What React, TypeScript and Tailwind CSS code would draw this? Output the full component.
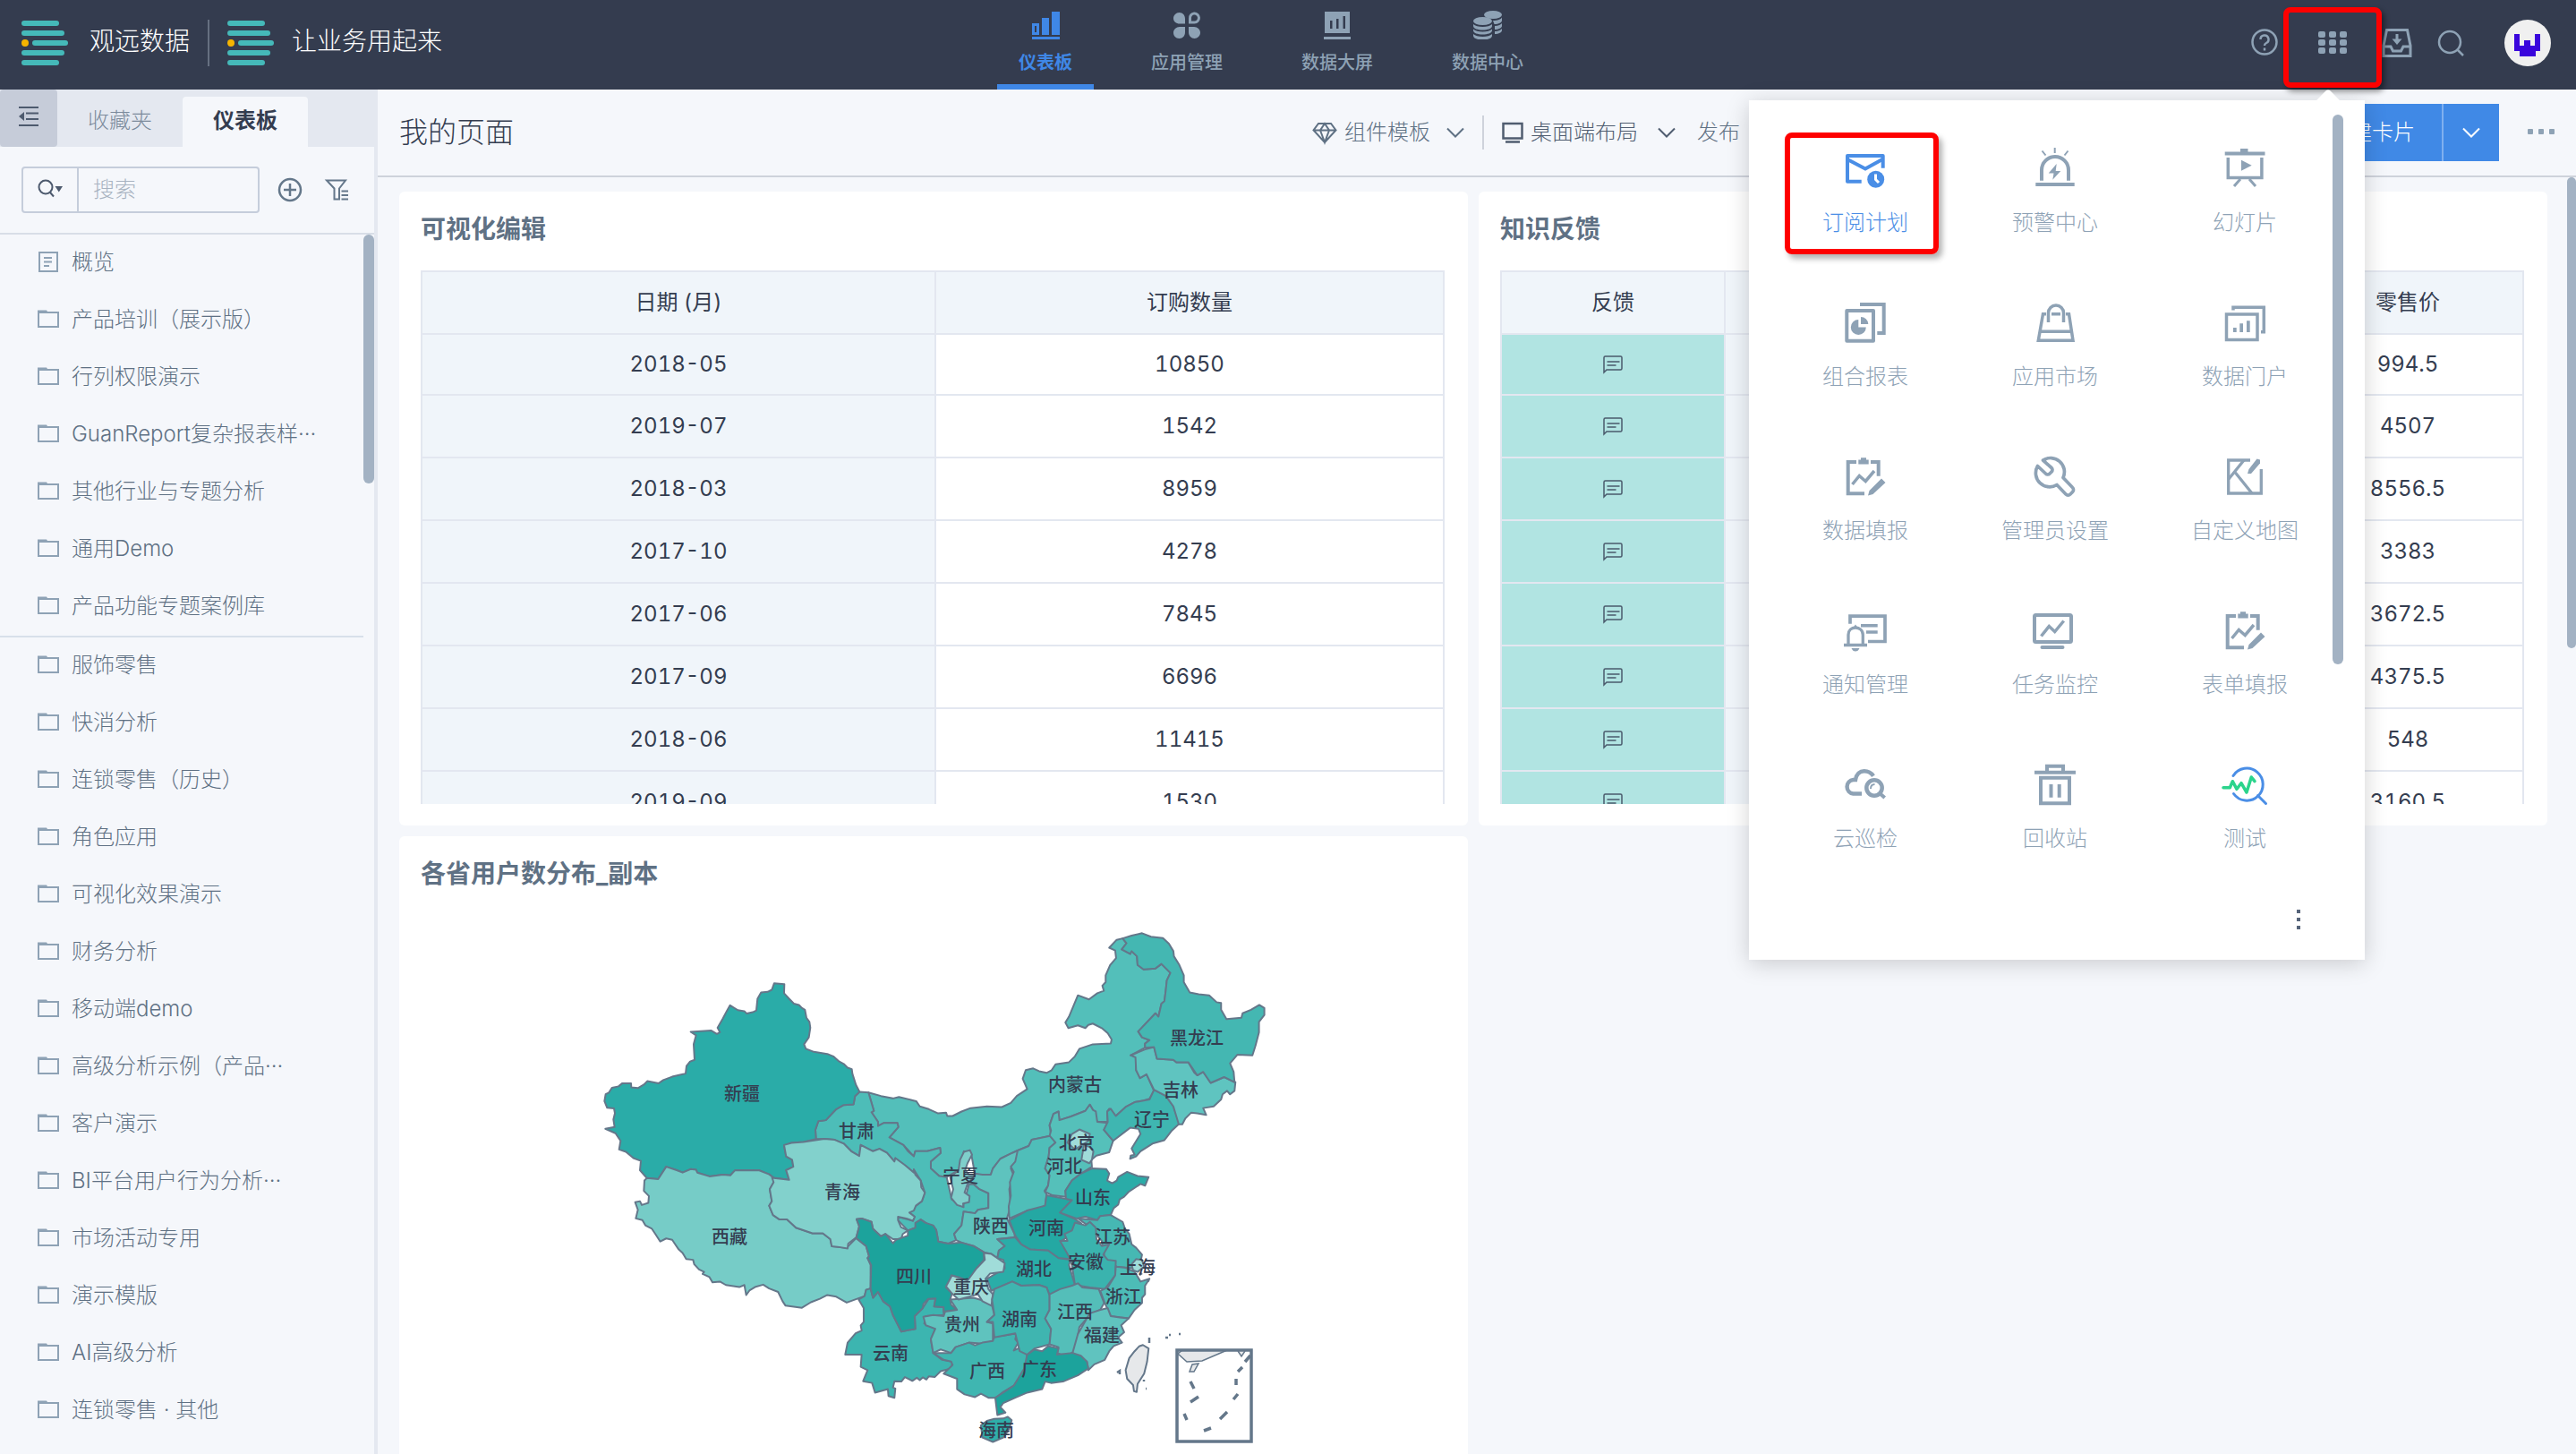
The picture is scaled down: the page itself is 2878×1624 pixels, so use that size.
import { useState, type ReactNode } from "react";

type Province = { name: string; fill: string; d: string };

const firstGroup = ["概览", "产品培训（展示版）", "行列权限演示", "GuanReport复杂报表样···", "其他行业与专题分析", "通用Demo", "产品功能专题案例库"];

const secondGroup = [
  "服饰零售",
  "快消分析",
  "连锁零售（历史）",
  "角色应用",
  "可视化效果演示",
  "财务分析",
  "移动端demo",
  "高级分析示例（产品···",
  "客户演示",
  "BI平台用户行为分析···",
  "市场活动专用",
  "演示模版",
  "AI高级分析",
  "连锁零售 · 其他",
];

const orders = [
  ["2018-05", "10850"],
  ["2019-07", "1542"],
  ["2018-03", "8959"],
  ["2017-10", "4278"],
  ["2017-06", "7845"],
  ["2017-09", "6696"],
  ["2018-06", "11415"],
  ["2019-09", "1530"],
];

const prices = ["994.5", "4507", "8556.5", "3383", "3672.5", "4375.5", "548", "3160.5"];

const App = () => {
  return (
    <div className="relative flex h-screen flex-col overflow-hidden bg-[#f5f7fb] font-[Inter,'Noto_Sans_CJK_SC',sans-serif] text-2xl font-light text-[#343d50]">
      <TopBar />
      <div className="flex min-h-0 flex-1">
        <Sidebar />
        <main className="flex min-w-0 flex-1 flex-col">
          <PageHeader />
          <div className="flex min-h-0 flex-1">
            <div className="grid min-w-0 flex-1 grid-cols-2 content-start gap-3 pt-4 pr-[22px] pl-6">
              <Card title="可视化编辑">
                <OrderTable />
              </Card>
              <Card title="知识反馈">
                <FeedbackTable />
              </Card>
              <Card title="各省用户数分布_副本">
                <ChinaMap />
              </Card>
            </div>
            <div className="h-[526px] w-[10px] rounded-full bg-[#a3b2c3]" />
          </div>
        </main>
      </div>
      <AppMenu />
    </div>
  );
};

const Logo = () => (
  <svg className="h-[52px] w-[52px]" viewBox="0 0 52 52" fill="#45b9b9">
    <rect x="0" y="1" width="42" height="6" rx="3" />
    <rect x="0" y="12" width="48" height="6" rx="3" />
    <rect x="12" y="23" width="40" height="6" rx="3" />
    <rect x="0" y="34" width="48" height="6" rx="3" />
    <rect x="0" y="45" width="42" height="6" rx="3" />
    <ellipse cx="4" cy="26" rx="4" ry="4" fill="#f5b400" />
  </svg>
);

const navItems: { label: string; icon: ReactNode }[] = [
  {
    label: "仪表板",
    icon: (
      <>
        <path d="M1 14h8v13H1zM4 17v7h2v-7z" fillRule="evenodd" />
        <path d="M12 8h8v19h-8zM23 1h9v26h-9zM1 29h31v3H1z" />
      </>
    ),
  },
  {
    label: "应用管理",
    icon: (
      <>
        <path d="M7.500 2c4 0 6.500 3 6.500 7v5.500H8C4 14.500 1 12 1 8.500S4 2 7.500 2zM14 18v6c0 4-2.500 7-6.500 7S1 28 1 24.500 4 18 8 18zM18 18h6c4 0 7 3 7 6.500S28 31 24.500 31 18 28 18 24z" />
        <path d="M19.500 13V8.500a5 5 0 1 1 5 4.500z" fill="none" stroke="currentColor" strokeWidth="3" />
      </>
    ),
  },
  {
    label: "数据大屏",
    icon: <path d="M2 1h28v24H2zM8 11v9h2.500v-9zM15 9v11h2.500V9zM22.500 6v14H25V6zM1 29h30v3H1z" fillRule="evenodd" />,
  },
  {
    label: "数据中心",
    icon: (
      <>
        <ellipse cx="22" cy="4.500" rx="10" ry="4.500" />
        <path d="M22 11c5 0 9-1.500 10-3.500v3.500c0 2-3.500 4-8.500 4zM24 17c4 0 7-1.500 8-3v3c0 2-3.500 4-8 4zM24 23c4 0 7-1.500 8-3v2c0 2-3.500 4-8 4z" />
        <ellipse cx="10.500" cy="11.500" rx="10.500" ry="4.500" />
        <path d="M0 15c2 2 6 3 10.500 3S19 17 21 15v2c0 3-5 4.500-10.500 4.500S0 20 0 17zM0 20.500c2 2 6 3 10.500 3s8.500-1 10.500-3V22c0 3-5 4.500-10.500 4.500S0 25 0 22zM0 26c2 2 6 3 10.500 3s8.500-1 10.500-3v2c0 3-5 4.500-10.500 4.500S0 31 0 28z" />
      </>
    ),
  },
];

const TopBar = () => {
  const [active, setActive] = useState("仪表板");
  return (
    <header className="flex h-[100px] shrink-0 items-center bg-[#343c4f]">
      <div className="flex flex-1 items-center pb-1 pl-6">
        <Logo />
        <span className="mb-1 ml-6 text-[28px] leading-9 text-white">观远数据</span>
        <span className="mx-5 h-[52px] w-[2px] bg-[#667081]" />
        <Logo />
        <span className="mb-1 ml-5 text-[28px] leading-9 text-white">让业务用起来</span>
      </div>
      <nav className="mr-[34px] flex h-full gap-10">
        {navItems.map(({ label, icon }) => (
          <button
            key={label}
            type="button"
            onClick={() => setActive(label)}
            className={`flex h-full flex-col items-center border-b-[6px] px-6 pt-3 text-xl leading-7 ${
              active === label ? "border-[#3f87e6] font-bold text-[#3f87e6]" : "border-transparent font-medium text-[#8ea2b5]"
            }`}
          >
            <svg className="mb-3 h-8 w-8" viewBox="0 0 32 32" fill="currentColor">
              {icon}
            </svg>
            {label}
          </button>
        ))}
      </nav>
      <div className="flex flex-1 items-center justify-end pr-7 pb-1 text-[#8ea2b5]">
        <button type="button" aria-label="帮助">
          <svg className="h-8 w-8" viewBox="0 0 32 32" fill="none" stroke="currentColor" strokeWidth="2.500">
            <circle cx="16" cy="15" r="13.500" />
            <path d="M11.500 12a4.500 4.500 0 1 1 6.500 4c-1.500.8-2 1.500-2 3" />
            <path d="M16 21.500v3" />
          </svg>
        </button>
        <div className="relative ml-11">
          <button type="button" aria-label="更多应用" className="block">
            <svg className="h-8 w-8" viewBox="0 0 32 32" fill="currentColor">
              {[3, 12, 21].map((y) => [0, 12, 24].map((x) => <rect key={`${x}-${y}`} x={x} y={y} width="8" height="7" rx="2" />))}
            </svg>
          </button>
          <div className="pointer-events-none absolute -top-6 -left-[39px] h-[90px] w-[110px] rounded-lg border-[6px] border-[#fe0000] shadow-[3px_4px_6px_rgba(0,0,0,0.45)]" />
        </div>
        <button type="button" aria-label="下载" className="ml-[38px]">
          <svg className="h-9 w-9" viewBox="0 0 36 36" fill="none" stroke="currentColor" strokeWidth="3">
            <path d="M10 3.500H6.500L3 21v11.500h30V21L29.500 3.500H26" />
            <path d="M10 3.500h16" />
            <path d="M3 22h8l2.500 5h9l2.500-5h8" />
            <path d="M18 8v8" />
            <path d="M12.500 13.500L18 20l5.500-6.500z" fill="currentColor" stroke="none" />
          </svg>
        </button>
        <button type="button" aria-label="搜索" className="ml-[26px]">
          <svg className="h-8 w-8" viewBox="0 0 32 32" fill="none" stroke="currentColor" strokeWidth="2.500">
            <circle cx="15" cy="15" r="12" />
            <path d="M23.500 23.500L30 30" />
          </svg>
        </button>
        <button type="button" aria-label="账户" className="ml-11">
          <svg className="h-[52px] w-[52px]" viewBox="0 0 52 52">
            <circle cx="26" cy="26" r="26" fill="#f0f0f0" />
            <path d="M11 16h6v13h5v-6h7v6h5V16h6v19h-5v6H17v-6h-6z" fill="#3a06dc" />
          </svg>
        </button>
      </div>
    </header>
  );
};

const Sidebar = () => {
  const [tab, setTab] = useState("仪表板");
  return (
    <aside className="flex w-[422px] shrink-0 flex-col border-r-4 border-[#e4e8f0]">
      <div className="flex h-16 shrink-0 items-end bg-[#e4e8f0]">
        <button type="button" aria-label="收起" className="flex h-16 w-16 items-center justify-center rounded-sm bg-[#c6ccd9] pb-1">
          <svg className="h-6 w-6" viewBox="0 0 24 24" fill="none" stroke="#4d5a6e" strokeWidth="2">
            <path d="M1 2h22M9 8.500h14M9 15h14M1 22h22" />
            <path d="M7 7v10l-6-5z" fill="#4d5a6e" stroke="none" />
          </svg>
        </button>
        {["收藏夹", "仪表板"].map((name) => (
          <button
            key={name}
            type="button"
            onClick={() => setTab(name)}
            className={`h-14 w-[140px] rounded-t pb-[2px] ${tab === name ? "bg-[#f5f7fb] font-bold text-[#343d50]" : "text-[#7b8a9b]"}`}
          >
            {name}
          </button>
        ))}
      </div>
      <div className="flex h-[98px] shrink-0 items-center border-b-2 border-[#d8dee7] pl-6">
        <div className="flex h-[52px] w-[266px] rounded-sm border-2 border-[#c5cddb]">
          <button type="button" aria-label="搜索范围" className="flex w-[62px] shrink-0 items-center justify-center border-r-2 border-[#c5cddb]">
            <svg className="h-7 w-7" viewBox="0 0 28 28" fill="none" stroke="#4d5a6e" strokeWidth="2">
              <circle cx="9" cy="11" r="7.500" />
              <path d="M14 17l4 4.500" />
              <path d="M19.500 10H28l-4.200 6.500z" fill="#4d5a6e" stroke="none" />
            </svg>
          </button>
          <input aria-label="搜索" placeholder="搜索" className="w-full min-w-0 bg-transparent px-4 placeholder:text-[#a8b3c1]" />
        </div>
        <button type="button" aria-label="新建" className="ml-5">
          <svg className="h-7 w-7" viewBox="0 0 28 28" fill="none" stroke="#64778a" strokeWidth="2.500">
            <circle cx="14" cy="14" r="12" />
            <path d="M14 7v14M7 14h14" />
          </svg>
        </button>
        <button type="button" aria-label="筛选" className="ml-6">
          <svg className="h-7 w-7" viewBox="0 0 28 28" fill="none" stroke="#64778a" strokeWidth="2">
            <path d="M3 3.500h21l-7 9v12h-5.500v-12z" />
            <path d="M19.500 15.500H27M19.500 20H27M19.500 24.500H27" />
          </svg>
        </button>
      </div>
      <div className="flex min-h-0 flex-1 overflow-hidden">
        <div className="min-w-0 flex-1 text-[#5f7184]">
          <ul className="border-b-2 border-[#d8e0ea]">
            {firstGroup.map((name, i) => (
              <SidebarItem key={name} name={name} page={i === 0} />
            ))}
          </ul>
          <ul>
            {secondGroup.map((name) => (
              <SidebarItem key={name} name={name} />
            ))}
          </ul>
        </div>
        <div className="h-[278px] w-3 rounded-full bg-[#a3b2c3]" />
      </div>
    </aside>
  );
};

const SidebarItem = ({ name, page }: { name: string; page?: boolean }) => (
  <li>
    <a href="#" className="flex h-16 items-center gap-[14px] pb-[2px] pl-[42px] whitespace-nowrap">
      <svg className="h-6 w-6 shrink-0" viewBox="0 0 24 24" fill="none" stroke="#8ea2b5" strokeWidth="2">
        {page ? (
          <path d="M2 1h20v21H2zM7 7h9M7 11.500h9M7 16h6" />
        ) : (
          <>
            <path d="M1 4h22v16H1z" />
            <path d="M0 1.500h10l2 3H0z" fill="#8ea2b5" stroke="none" />
          </>
        )}
      </svg>
      {name}
    </a>
  </li>
);

const Chevron = () => (
  <svg className="h-5 w-5" viewBox="0 0 20 20" fill="none" stroke="currentColor" strokeWidth="2">
    <path d="M1 5.500l9 9 9-9" />
  </svg>
);

const PageHeader = () => (
  <div className="flex h-[98px] shrink-0 items-center border-b-2 border-[#ced2db] pr-6 pl-6 text-[#5f7184]">
    <h1 className="flex-1 text-[32px] leading-10 text-[#343d50]">我的页面</h1>
    <button type="button" className="flex items-center">
      <svg className="mr-2 h-7 w-7" viewBox="0 0 28 28" fill="none" stroke="currentColor" strokeWidth="2">
        <path d="M7 4h14l5.500 7.500L14 25 1.500 11.500zM1.500 11.500h25M14 25L9 11.500 14 4l5 7.500z" />
      </svg>
      组件模板
      <span className="ml-[18px]">
        <Chevron />
      </span>
    </button>
    <span className="mx-5 h-[38px] w-[2px] bg-[#ced2db]" />
    <button type="button" className="flex items-center text-[#505d70]">
      <svg className="mr-2 h-6 w-6" viewBox="0 0 24 24" fill="none" stroke="currentColor" strokeWidth="2.500">
        <path d="M1.500 2h21v16.500h-21zM4 22.500h16" />
      </svg>
      桌面端布局
      <span className="ml-[22px]">
        <Chevron />
      </span>
    </button>
    <button type="button" className="mr-[628px] ml-6">
      发布
    </button>
    <button type="button" className="h-16 w-[158px] border-r-2 border-[#7fb0ef] bg-[#4089e6] text-white">
      新建卡片
    </button>
    <button type="button" aria-label="更多卡片" className="flex h-16 w-[62px] items-center justify-center bg-[#4089e6] text-white">
      <Chevron />
    </button>
    <button type="button" aria-label="更多" className="ml-8">
      <svg className="h-[30px] w-[30px]" viewBox="0 0 30 30" fill="#8ea2b5">
        <rect x="0" y="11" width="6" height="6" rx="1" />
        <rect x="12" y="11" width="6" height="6" rx="1" />
        <rect x="24" y="11" width="6" height="6" rx="1" />
      </svg>
    </button>
  </div>
);

const Card = ({ title, children }: { title: string; children: ReactNode }) => (
  <section className="h-[708px] rounded-md bg-white pt-6 pr-[26px] pl-6">
    <h2 className="mb-7 text-[28px] leading-9 font-bold text-[#5f7184]">{title}</h2>
    <div className="h-[596px] overflow-hidden">{children}</div>
  </section>
);

const cell = "border-2 border-[#e3e7f0] p-0 text-center font-normal";

const OrderTable = () => (
  <table className="w-full table-fixed border-collapse font-normal tabular-nums">
    <thead>
      <tr className="h-[70px] bg-[#f0f5fa]">
        <th className={`${cell} w-[574px]`}>日期 (月)</th>
        <th className={cell}>订购数量</th>
      </tr>
    </thead>
    <tbody>
      {orders.map(([month, amount]) => (
        <tr key={month} className="h-[70px] first:h-[68px]">
          <td className={`${cell} bg-[#f0f5fa]`}>{month}</td>
          <td className={cell}>{amount}</td>
        </tr>
      ))}
    </tbody>
  </table>
);

const FeedbackTable = () => (
  <table className="w-full table-fixed border-collapse font-normal tabular-nums">
    <thead>
      <tr className="h-[70px] bg-[#f0f5fa]">
        <th className={`${cell} w-[250px]`}>反馈</th>
        <th className={cell} />
        <th className={cell} />
        <th className={`${cell} w-[258px]`}>零售价</th>
      </tr>
    </thead>
    <tbody>
      {prices.map((price) => (
        <tr key={price} className="h-[70px] first:h-[68px]">
          <td className={`${cell} bg-[#b1e4e2]`}>
            <svg className="mx-auto h-6 w-6" viewBox="0 0 24 24" fill="none" stroke="#4a5a6c" strokeWidth="1.500">
              <path d="M2 21V4.500q0-1.500 1.500-1.500h17q1.500 0 1.500 1.500v12q0 1.500-1.500 1.500H5z" />
              <path d="M5.500 9h14M5.500 13h10" />
            </svg>
          </td>
          <td className={`${cell} bg-[#f0f5fa]`} />
          <td className={cell} />
          <td className={cell}>{price}</td>
        </tr>
      ))}
    </tbody>
  </table>
);

const clipboard = (
  <>
    <path d="M14 7H4.700v35.300H23M30 7h8.700v15.700" />
    <path d="M16.300 4.500h2.700v-2.200h6v2.200h2.700v5H16.300z" fill="currentColor" stroke="none" />
    <path d="M9.500 32l7.800-9.500 7 6L34 17" strokeWidth="3.500" />
    <path d="M42 25.500l4.500 4.500-14 13-5.500 1.500 1.500-5.500z" fill="currentColor" stroke="none" />
  </>
);

const apps: { name: string; icon: ReactNode }[] = [
  {
    name: "订阅计划",
    icon: (
      <>
        <path d="M19.700 37.700H4V9h39.700v13.700" strokeLinejoin="round" />
        <path d="M3 12.500l21 11 20-11" />
        <circle cx="35.700" cy="35.300" r="9.500" fill="currentColor" stroke="none" />
        <path d="M35.500 29.500v6l3.500 3.500" stroke="#fff" strokeWidth="3" />
      </>
    ),
  },
  {
    name: "预警中心",
    icon: (
      <>
        <path d="M9 36.700V25a15 15 0 0 1 30 0v11.700M2.300 41h43.400" />
        <path d="M23.700 0v6M9.500 3.500l4 5M38.500 3.500l-4 5" strokeWidth="2" />
        <path d="M25.700 18l-9 10.500h5.800l-1.200 7.200 9-9.700h-5.600z" fill="currentColor" stroke="none" />
      </>
    ),
  },
  {
    name: "幻灯片",
    icon: (
      <>
        <path d="M1.700 6.500h44.800" />
        <path d="M19 3h8.500" />
        <path d="M5.300 11v22.500h37.600V11" strokeWidth="3.500" />
        <path d="M20 13.700l11.700 6-11.700 6z" fill="currentColor" stroke="none" />
        <path d="M19 35l-7 8M29 35l7 8" strokeWidth="3" />
      </>
    ),
  },
  {
    name: "组合报表",
    icon: (
      <>
        <path d="M3.300 10h29.700v33.700H3.300z" strokeLinejoin="round" />
        <path d="M18 3h26.700v32h-7.400" />
        <path d="M16.300 20v8.500h8.500a8.500 8.500 0 1 1-8.500-8.500zM19 17v8h8.300a8.300 8.300 0 0 0-8.300-8z" fill="currentColor" stroke="none" />
      </>
    ),
  },
  {
    name: "应用市场",
    icon: (
      <path
        d="M14 13.700h-3.500L5.300 43.300H44L39.500 13.700H36M20 13.700h10M6.500 33.300H43M16.500 23V12.500a8.500 8.500 0 0 1 17 0V23"
        strokeWidth="3.500"
      />
    ),
  },
  {
    name: "数据门户",
    icon: (
      <>
        <path d="M3.500 14h34.500v28.500H3.500zM11 9.500V6.300h34.300v27.500H42" strokeWidth="3.500" />
        <path d="M11 29h3.700v5H11zM18.300 24.300H22V34h-3.700zM26 21.300h3.700V34H26z" fill="currentColor" stroke="none" />
      </>
    ),
  },
  { name: "数据填报", icon: clipboard },
  {
    name: "管理员设置",
    icon: (
      <path
        d="M10.500 5A15.500 15.500 0 0 1 33 24.500L43.500 35.500a3.500 3.500 0 0 1 0 5L41 43a3.500 3.500 0 0 1-5 0L26 32.500A15.500 15.500 0 0 1 4.500 11.500l9 8.500a3 3 0 0 0 4.500 0l2-2a3 3 0 0 0 0-4.500z"
        strokeWidth="3.700"
        strokeLinejoin="round"
      />
    ),
  },
  {
    name: "自定义地图",
    icon: (
      <>
        <path d="M30 5H5.700v37h36.600V15" strokeWidth="3.300" />
        <path d="M23 5L6 26M13.500 19L32 42" strokeWidth="3.300" />
        <path d="M37.500 3.500l3.500 1v4L31 20h-4l1.500-5z" fill="currentColor" stroke="none" />
      </>
    ),
  },
  {
    name: "通知管理",
    icon: (
      <>
        <path d="M7 15.700V7.200h39v28.300H27" strokeWidth="3.700" />
        <path d="M19 17.700h18.700M25 25h12.700" strokeWidth="3.500" />
        <path d="M0 39.500h26M5 39V28c0-5 3.500-8 8-8s8.300 3 8.300 8v11" strokeWidth="3.300" />
        <path d="M10.500 20l2.500-3.500 2.500 3.500zM8.500 43h9q-1.500 3.500-4.500 3.500T8.500 43z" fill="currentColor" stroke="none" />
      </>
    ),
  },
  {
    name: "任务监控",
    icon: (
      <>
        <rect x="1" y="6" width="41" height="30" rx="1.500" />
        <path d="M9.500 42h23" strokeLinecap="round" />
        <path d="M8.500 29.500l8.800-11 6.400 6 10-12" strokeWidth="3.500" />
      </>
    ),
  },
  { name: "表单填报", icon: clipboard },
  {
    name: "云巡检",
    icon: (
      <>
        <path d="M20 33.500H10.500a7.800 7.800 0 0 1 0-15.500h2.500C14 11.500 18 8.300 22.700 8.300c4.500 0 8 2 10.300 5.500" strokeWidth="4.500" />
        <circle cx="34" cy="27" r="8.700" strokeWidth="4.500" />
        <path d="M30 28q0-5 4.500-5" strokeWidth="2" />
        <path d="M40 33l5.700 5" />
      </>
    ),
  },
  {
    name: "回收站",
    icon: (
      <>
        <path d="M1 9.700h46M15 8V2.700h18V8" />
        <path d="M8 15.700h32v28.600H8z" />
        <path d="M19.500 23v14.700M28.700 23v14.700" />
      </>
    ),
  },
  {
    name: "测试",
    icon: (
      <>
        <path d="M11 13.500a18 18 0 1 1 .5 20M38.500 35.500l9 9" stroke="#4a8ee6" strokeWidth="3" strokeLinecap="round" />
        <path
          d="M0 26.700h7.300l3-7 4.700 8.600 5-6.600 6 10.300 5.300-17 3.700 4.700"
          stroke="#2bd48c"
          strokeWidth="3.500"
          strokeLinecap="round"
          strokeLinejoin="round"
        />
      </>
    ),
  },
];

const AppMenu = () => (
  <div className="absolute top-28 right-[236px] w-[688px] bg-white pt-[18px] shadow-[0_4px_24px_rgba(0,0,0,0.18)]">
    <div className="absolute -top-2 right-[29px] h-6 w-6 rotate-45 rounded-sm bg-white" />
    <div className="grid grid-cols-3 pr-7 pl-6">
      {apps.map(({ name, icon }, i) => (
        <button
          key={name}
          type="button"
          className={`relative flex h-[172px] flex-col items-center justify-center gap-[18px] leading-9 ${i === 0 ? "text-[#4a8ee6]" : "text-[#8ea2b5]"}`}
        >
          <svg className="h-12 w-12 overflow-visible" viewBox="0 0 48 48" fill="none" stroke="currentColor" strokeWidth="4">
            {icon}
          </svg>
          {name}
          {i === 0 ? (
            <span className="absolute inset-y-[18px] right-6 left-4 rounded-lg border-[6px] border-[#fe0000] shadow-[4px_5px_6px_rgba(0,0,0,0.3)]" />
          ) : null}
        </button>
      ))}
    </div>
    <div className="flex h-[82px] items-center justify-end pr-16 pb-2">
      <button type="button" aria-label="设置" className="flex flex-col gap-[5px] px-2">
        <span className="h-1 w-1 bg-[#56647a]" />
        <span className="h-1 w-1 bg-[#56647a]" />
        <span className="h-1 w-1 bg-[#56647a]" />
      </button>
    </div>
    <div className="absolute top-4 right-6 h-[614px] w-3 rounded-full bg-[#a3b2c3]" />
  </div>
);

const provinces: Province[] = [
  {
    name: "内蒙古",
    fill: "#53bfba",
    d: "M988 520L1030 530 1070 537 1090 533 1148 545 1160 560 1190 568 1220 580 1248 578 1252 588 1270 588 1300 575 1330 565 1385 560 1435 562 1465 550 1485 530 1520 510 1505 480 1515 455 1540 450 1560 458 1585 463 1602 455 1615 438 1660 432 1680 415 1695 393 1740 380 1800 378 1803 366 1790 348 1770 333 1740 320 1725 324 1715 333 1690 325 1658 333 1648 317 1660 300 1690 238 1727 250 1755 232 1777 225 1772 210 1783 200 1783 180 1798 150 1818 130 1815 108 1795 100 1820 77 1840 73 1853 87 1837 105 1865 118 1870 110 1888 125 1890 150 1910 163 1950 160 1970 147 2000 173 1988 195 1985 220 1980 255 1970 262 1960 300 1950 290 1892 343 1905 360 1930 368 1915 378 1915 390 1867 412 1885 415 1885 455 1898 478 1920 467 1945 515 1930 538 1910 543 1880 548 1850 562 1817 588 1795 567 1788 575 1790 605 1755 605 1740 570 1730 555 1715 573 1665 590 1628 600 1625 575 1608 582 1595 615 1600 645 1535 657 1525 675 1488 688 1430 712 1405 740 1398 758 1345 758 1333 700 1308 690 1290 745 1250 765 1225 762 1197 740 1197 720 1230 695 1228 680 1185 690 1145 690 1140 705 1105 672 1058 650 1088 620 1085 608 1040 608 1020 617 1020 605 998 577 1006 573Z",
  },
  {
    name: "甘肃",
    fill: "#4dbdb8",
    d: "M958 518L988 520 1006 573 998 577 1020 605 1020 617 1040 608 1085 608 1088 620 1058 650 1105 672 1120 690 1140 705 1145 690 1185 690 1228 680 1230 695 1197 720 1197 740 1225 762 1250 765 1267 830 1305 850 1325 785 1340 785 1360 800 1390 812 1390 855 1355 860 1345 870 1307 865 1300 905 1275 930 1282 948 1255 958 1222 952 1215 918 1163 888 1145 912 1120 920 1087 890 1087 880 1137 892 1143 880 1125 868 1147 848 1167 835 1177 810 1163 775 1140 743 1140 752 1078 710 1075 720 1050 695 1025 683 1003 690 962 672 957 704 930 690 905 668 875 657 840 654 812 655 810 628 820 603 845 600 880 568 905 556 938 554 943 530Z",
  },
  {
    name: "新疆",
    fill: "#2aaca8",
    d: "M958 518L946 498 934 465 932 452 918 448 905 437 890 430 870 415 850 408 805 402 778 393 772 380 788 360 793 332 790 315 780 303 775 280 765 275 755 266 738 262 722 248 705 232 706 206 672 203 664 222 650 228 628 230 616 248 612 282 600 287 580 291 572 284 550 281 524 267 514 282 500 305 482 332 490 345 480 350 460 340 392 344 410 354 402 380 405 425 390 430 378 443 375 465 330 474 300 484 285 493 247 487 235 497 215 507 193 505 192 493 163 493 150 502 128 506 118 520 107 525 103 545 112 564 135 566 138 580 133 598 137 620 106 625 140 638 157 660 152 685 175 692 200 710 225 718 222 745 245 768 283 771 310 735 345 745 365 752 392 742 410 744 414 752 455 763 500 758 525 760 540 746 620 745 655 757 670 767 722 773 712 745 736 735 732 715 712 705 705 675 730 666 770 663 812 655 810 628 820 603 845 600 880 568 905 556 938 554 943 530Z",
  },
  {
    name: "西藏",
    fill: "#76ccc7",
    d: "M245 768L237 775 235 805 252 820 250 840 228 846 222 835 206 838 215 860 208 885 230 890 240 905 262 915 275 932 290 952 310 943 330 947 340 960 352 975 365 985 377 1003 400 1005 404 1018 420 1033 437 1040 432 1046 455 1055 465 1070 490 1068 510 1078 555 1084 572 1078 578 1107 590 1093 610 1083 635 1077 655 1088 685 1098 700 1125 710 1138 765 1144 795 1128 825 1118 850 1107 880 1112 915 1129 950 1118 975 1110 980 1092 995 1088 995 1020 985 1000 990 995 980 965 947 942 915 970 865 966 860 945 835 928 800 928 745 912 715 888 690 888 668 875 655 848 664 835 657 800 670 780 670 767 655 757 620 745 540 746 525 760 500 758 455 763 414 752 410 744 392 742 365 752 345 745 310 735 283 771Z",
  },
  {
    name: "青海",
    fill: "#82d1cc",
    d: "M705 672L730 666 770 663 840 654 875 657 905 668 930 690 957 704 962 672 1003 690 1025 683 1050 695 1075 720 1078 710 1110 730 1140 752 1140 743 1145 758 1163 775 1165 795 1177 810 1167 835 1147 848 1140 862 1125 868 1143 880 1137 892 1115 885 1087 880 1087 890 1097 910 1120 920 1103 930 1097 945 1070 945 1045 930 1030 937 1003 915 998 895 965 885 948 887 957 908 947 940 920 958 918 972 890 968 865 966 860 945 835 928 800 928 745 912 715 888 690 888 668 875 655 848 664 835 657 800 670 780 665 767 722 773 712 745 736 735 732 715 712 705Z",
  },
  {
    name: "陕西",
    fill: "#5ec3be",
    d: "M1488 688L1470 695 1430 712 1405 740 1398 758 1370 758 1345 755 1320 785 1340 785 1360 800 1390 812 1390 855 1355 860 1345 870 1307 865 1300 905 1275 930 1282 948 1300 955 1340 965 1375 983 1400 988 1420 1000 1425 978 1445 965 1420 945 1478 940 1478 930 1452 885 1465 850 1460 800 1475 760 1465 740 1490 715Z",
  },
  {
    name: "宁夏",
    fill: "#7fcfcb",
    d: "M1308 692L1328 687 1335 700 1320 725 1312 745 1325 758 1345 760 1320 785 1310 810 1327 820 1325 838 1305 842 1307 852 1285 846 1265 825 1272 800 1262 765 1290 745 1295 715Z",
  },
  {
    name: "云南",
    fill: "#3cb5b0",
    d: "M995 1088L1003 1115 1020 1098 1037 1125 1060 1140 1070 1165 1098 1213 1145 1205 1143 1168 1170 1145 1190 1118 1213 1117 1208 1140 1240 1142 1240 1165 1180 1168 1175 1190 1212 1205 1197 1235 1205 1275 1235 1295 1270 1300 1265 1320 1230 1328 1210 1345 1190 1343 1182 1352 1170 1346 1160 1354 1150 1347 1135 1356 1110 1345 1098 1358 1075 1357 1070 1375 1078 1378 1075 1405 1055 1400 1053 1380 1010 1390 1000 1362 970 1357 985 1325 962 1315 965 1280 910 1280 918 1245 945 1218 965 1210 962 1195 972 1185 972 1145 955 1120 975 1110 980 1092Z",
  },
  {
    name: "四川",
    fill: "#1ca39c",
    d: "M965 885L998 895 1003 915 1030 937 1045 930 1070 957 1080 947 1120 935 1120 920 1145 912 1145 898 1163 888 1180 898 1205 905 1215 918 1222 952 1255 958 1300 955 1340 965 1375 983 1375 1005 1345 1035 1325 1068 1290 1055 1265 1050 1262 1068 1248 1085 1268 1102 1262 1120 1265 1135 1285 1150 1240 1155 1240 1142 1208 1140 1213 1117 1188 1118 1172 1133 1170 1145 1143 1168 1145 1205 1098 1213 1070 1165 1060 1140 1037 1125 1020 1098 1003 1115 995 1088 997 1020 985 1000 990 995 980 965 947 942 957 908 948 887Z",
  },
  {
    name: "贵州",
    fill: "#5fc3be",
    d: "M1172 1170L1205 1165 1240 1168 1245 1155 1285 1150 1262 1120 1340 1115 1400 1130 1410 1165 1385 1185 1405 1190 1405 1240 1370 1248 1325 1245 1280 1258 1265 1275 1230 1265 1205 1275 1197 1235 1212 1205 1180 1195Z",
  },
  {
    name: "广西",
    fill: "#3fb6b1",
    d: "M1205 1275L1265 1275 1280 1258 1325 1245 1345 1253 1370 1245 1405 1240 1410 1228 1440 1225 1485 1218 1480 1235 1490 1245 1475 1268 1495 1260 1520 1280 1515 1320 1475 1370 1440 1388 1415 1405 1390 1405 1365 1393 1345 1403 1310 1395 1285 1380 1285 1350 1240 1335 1270 1310 1265 1300 1240 1295Z",
  },
  {
    name: "山西",
    fill: "#4fbeb9",
    d: "M1488 688L1525 675 1535 657 1600 645 1615 665 1595 680 1592 705 1580 740 1595 760 1590 790 1578 805 1585 815 1580 848 1550 860 1520 862 1460 885 1458 850 1465 820 1462 780 1475 750 1465 735 1480 720Z",
  },
  {
    name: "河北",
    fill: "#55c0ba",
    d: "M1595 615L1608 582 1625 575 1628 600 1665 590 1715 573 1730 555 1740 570 1750 575 1755 605 1790 608 1777 628 1808 660 1795 693 1752 703 1735 715 1737 735 1700 755 1670 775 1648 805 1650 822 1605 818 1580 808 1590 790 1595 760 1580 740 1592 705 1595 680 1615 665 1595 645 1600 630Z",
  },
  { name: "北京", fill: "#a0dcd9", d: "M1670 640L1695 627 1730 640 1725 660 1680 685 1655 665Z" },
  { name: "天津", fill: "#a0dcd9", d: "M1710 672L1730 678 1742 690 1737 715 1728 725 1702 715Z" },
  {
    name: "河南",
    fill: "#24a8a3",
    d: "M1585 818L1650 828 1670 832 1630 868 1680 887 1702 900 1700 915 1635 950 1665 1003 1625 1000 1590 978 1530 975 1500 960 1480 935 1460 890 1520 862 1580 848Z",
  },
  {
    name: "山东",
    fill: "#2aaca8",
    d: "M1648 805L1670 775 1700 755 1737 740 1785 742 1795 755 1788 775 1805 783 1820 775 1825 765 1855 750 1890 762 1927 765 1915 790 1900 785 1860 808 1845 822 1830 830 1825 845 1810 855 1800 875 1765 878 1755 890 1715 880 1685 885 1630 868 1670 832 1650 828Z",
  },
  {
    name: "江苏",
    fill: "#46b8b3",
    d: "M1690 885L1755 890 1765 878 1800 875 1840 895 1848 915 1862 930 1870 960 1885 970 1905 990 1900 1010 1880 1030 1820 1025 1780 1000 1770 950 1730 910Z",
  },
  {
    name: "安徽",
    fill: "#3ab3ae",
    d: "M1680 897L1715 905 1730 895 1750 912 1752 945 1770 965 1795 960 1775 990 1790 1005 1817 1008 1815 1050 1780 1090 1730 1085 1680 1078 1670 1020 1665 1003 1630 950 1655 950 1645 930 1670 920Z",
  },
  {
    name: "湖北",
    fill: "#2aada8",
    d: "M1420 945L1445 943 1480 940 1500 960 1530 975 1590 978 1625 1000 1665 1005 1660 1020 1680 1078 1595 1108 1585 1085 1560 1078 1500 1080 1470 1068 1410 1090 1400 1095 1385 1060 1445 1030 1440 1005 1420 1000 1425 978 1445 965Z",
  },
  {
    name: "重庆",
    fill: "#a0dcd9",
    d: "M1375 985L1400 988 1445 1015 1440 1040 1395 1045 1380 1060 1390 1090 1405 1105 1400 1138 1370 1125 1355 1105 1290 1120 1265 1100 1248 1082 1268 1050 1320 1065 1350 1030 1378 1005Z",
  },
  {
    name: "湖南",
    fill: "#3fb5b0",
    d: "M1410 1090L1470 1068 1500 1080 1560 1078 1585 1085 1595 1108 1595 1150 1580 1175 1600 1205 1595 1250 1545 1262 1520 1280 1495 1270 1480 1218 1410 1230 1405 1185 1385 1185 1410 1165 1402 1120Z",
  },
  {
    name: "江西",
    fill: "#54beb9",
    d: "M1595 1105L1630 1090 1670 1080 1690 1073 1705 1085 1760 1090 1778 1130 1765 1150 1730 1165 1695 1200 1680 1270 1650 1285 1620 1275 1625 1258 1595 1250 1600 1205 1580 1175 1595 1150Z",
  },
  {
    name: "浙江",
    fill: "#4dbcb7",
    d: "M1817 1025L1850 1028 1880 1040 1900 1068 1930 1060 1915 1080 1915 1105 1905 1115 1905 1130 1880 1150 1860 1175 1800 1168 1780 1130 1765 1095 1790 1085 1815 1050Z",
  },
  { name: "上海", fill: "#a0dcd9", d: "M1870 1018L1885 1003 1905 1005 1912 1025 1890 1040 1875 1035Z" },
  {
    name: "福建",
    fill: "#60c3bf",
    d: "M1730 1160L1765 1150 1790 1145 1800 1168 1830 1172 1860 1175 1835 1195 1845 1215 1825 1230 1838 1245 1810 1255 1795 1270 1780 1295 1745 1308 1725 1325 1720 1300 1672 1275 1690 1220Z",
  },
  {
    name: "广东",
    fill: "#1ca39c",
    d: "M1520 1280L1545 1265 1570 1270 1590 1255 1625 1262 1620 1280 1672 1275 1700 1283 1720 1300 1725 1320 1690 1340 1640 1358 1600 1362 1580 1358 1570 1380 1520 1390 1480 1405 1440 1420 1430 1432 1447 1448 1420 1455 1413 1405 1475 1370 1510 1320Z",
  },
  { name: "海南", fill: "#2fafaa", d: "M1365 1485L1385 1472 1410 1466 1440 1465 1455 1460 1468 1470 1460 1495 1440 1520 1405 1533 1370 1520Z" },
  {
    name: "辽宁",
    fill: "#3fb6b1",
    d: "M1788 575L1800 567 1817 588 1850 562 1880 548 1930 540 1945 512 1985 530 2010 560 2030 610 2005 630 1980 658 1940 668 1900 690 1885 705 1865 712 1867 703 1880 700 1870 682 1900 640 1893 625 1865 622 1808 660 1777 628 1790 605Z",
  },
  {
    name: "吉林",
    fill: "#5fc4c0",
    d: "M1867 412L1915 395 1945 388 1955 422 2010 425 2020 432 2060 432 2080 462 2090 470 2110 460 2135 492 2180 475 2218 490 2215 515 2200 525 2190 515 2175 525 2170 540 2145 560 2110 565 2120 585 2090 580 2070 578 2050 595 2040 612 2028 612 2010 560 1985 530 1945 512 1920 467 1898 478 1885 455 1883 418Z",
  },
  {
    name: "黑龙江",
    fill: "#44b7b2",
    d: "M1840 73L1870 65 1905 58 1935 68 1975 72 1995 88 2010 110 2012 125 2030 150 2045 180 2045 200 2065 230 2095 235 2130 238 2155 258 2170 260 2170 280 2188 307 2238 303 2242 290 2270 280 2298 266 2315 275 2315 295 2297 315 2297 345 2285 385 2275 412 2225 410 2200 435 2212 460 2215 490 2180 475 2135 492 2110 460 2090 470 2060 432 2020 432 2010 425 1955 422 1945 388 1915 390 1915 378 1930 368 1905 360 1892 343 1950 290 1960 300 1970 262 1980 255 1985 220 1988 195 2000 173 1970 147 1950 160 1910 163 1890 150 1888 125 1870 110 1865 118 1837 105 1853 87Z",
  },
  {
    name: "台湾",
    fill: "#e6e8ea",
    d: "M1908 1252L1927 1262 1922 1300 1912 1335 1890 1365 1887 1388 1878 1386 1875 1368 1855 1350 1850 1325 1862 1290 1880 1270 1895 1256Z",
  },
];

const mapLabels: [string, number, number][] = [
  ["新疆", 188, 201],
  ["甘肃", 316, 243],
  ["青海", 300, 311],
  ["西藏", 174, 361],
  ["宁夏", 432, 293],
  ["陕西", 466, 349],
  ["四川", 380, 405],
  ["重庆", 444, 417],
  ["贵州", 434, 459],
  ["云南", 354, 491],
  ["广西", 462, 511],
  ["海南", 472, 577],
  ["黑龙江", 696, 139],
  ["内蒙古", 560, 191],
  ["吉林", 678, 197],
  ["辽宁", 646, 230],
  ["北京", 562, 256],
  ["河北", 548, 282],
  ["山东", 580, 317],
  ["河南", 528, 351],
  ["江苏", 602, 361],
  ["安徽", 572, 389],
  ["湖北", 514, 397],
  ["上海", 630, 395],
  ["浙江", 614, 428],
  ["江西", 560, 445],
  ["湖南", 498, 453],
  ["福建", 590, 471],
  ["广东", 520, 509],
];

const ChinaMap = () => (
  <svg className="mx-auto h-[602px] w-[796px]" viewBox="3 2 796 602" role="img" aria-label="各省用户数分布">
    <g transform="scale(0.3333 0.3852)" stroke="#64778a" strokeWidth="2" strokeLinejoin="round">
      {provinces.map(({ name, fill, d }) => (
        <path key={name} d={d} fill={fill} vectorEffect="non-scaling-stroke" />
      ))}
    </g>
    {/* small islands */}
    <path
      d="M643 474v6M661 474h3M665 471h2M676 470h2M607 513l3-2v4M637 521v2M639 531h1M632 404l3-2M641 410l2 1"
      fill="none"
      stroke="#64778a"
      strokeWidth="2.500"
    />
    {/* South China Sea inset */}
    <g stroke="#64778a">
      <path d="M675 492l5-4h50l-28 12-17 1z" fill="#e6e8ea" strokeWidth="1.500" />
      <path d="M742 489l4 6 4-6" fill="#e6e8ea" strokeWidth="1.500" />
      <path d="M688 512l3-8 7-1-5 9z" fill="#e6e8ea" strokeWidth="1.500" />
      <path
        d="M689 523l4 8M689 546l9-6M682 559l3 7M704 578l8-3M722 565l8-8M737 543l5-6M740 520v7M742 512l5-5M750 501l6-7"
        fill="none"
        strokeWidth="3.500"
      />
      <rect x="674" y="488" width="83" height="102" fill="none" strokeWidth="3.500" />
    </g>
    <g fill="#343d50" fontSize="20" fontWeight="500" textAnchor="middle">
      {mapLabels.map(([name, x, y]) => (
        <text key={name} x={x} y={y + 8}>
          {name}
        </text>
      ))}
    </g>
  </svg>
);

export default App;
